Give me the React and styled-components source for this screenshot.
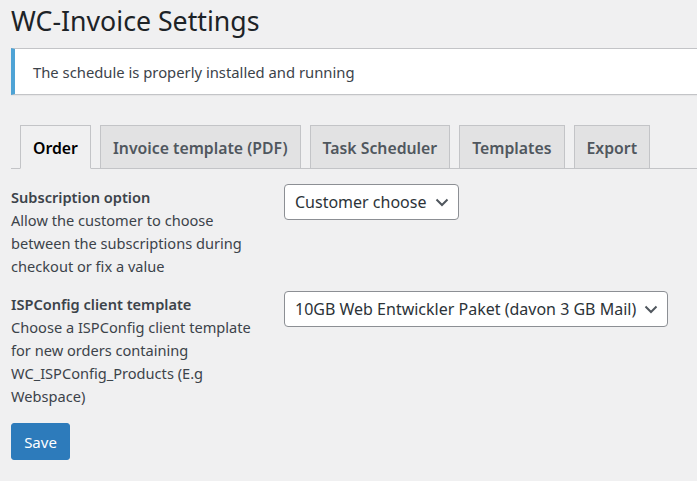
import React from "react";
import styled, { createGlobalStyle } from "styled-components";

const GlobalStyle = createGlobalStyle`
	html, body {
		margin: 0;
		padding: 0;
		background: #f0f0f1;
		font-family: "Noto Sans", "Open Sans", sans-serif;
		color: #3c434a;
	}
`;

const tabs = ["Order", "Invoice template (PDF)", "Task Scheduler", "Templates", "Export"];

const fields = [
	{
		title: "Subscription option",
		lines: ["Allow the customer to choose", "between the subscriptions during", "checkout or fix a value"],
		value: "Customer choose",
	},
	{
		title: "ISPConfig client template",
		lines: [
			"Choose a ISPConfig client template",
			"for new orders containing",
			"WC_ISPConfig_Products (E.g",
			"Webspace)",
		],
		value: "10GB Web Entwickler Paket (davon 3 GB Mail)",
	},
];

const Chevron = () => (
	<svg width="16" height="16" viewBox="0 0 16 16">
		<path d="M2.5 5.5l5.5 5.5 5.5-5.5" fill="none" stroke="#50575e" strokeWidth="2" />
	</svg>
);

export default function App() {
	return (
		<>
			<GlobalStyle />
			<StyledWrap>
				<StyledTitle>WC-Invoice Settings</StyledTitle>
				<StyledNotice>The schedule is properly installed and running</StyledNotice>
				<StyledTabBar>
					{tabs.map((t, i) => (
						<StyledTab key={t} $active={i === 0}>
							{t}
						</StyledTab>
					))}
				</StyledTabBar>
				<StyledForm>
					{fields.map((f) => (
						<StyledRow key={f.title}>
							<StyledLabelBox>
								<StyledLabel>{f.title}</StyledLabel>
								{f.lines.map((l) => (
									<StyledDesc key={l}>{l}</StyledDesc>
								))}
							</StyledLabelBox>
							<StyledSelect>
								<span>{f.value}</span>
								<Chevron />
							</StyledSelect>
						</StyledRow>
					))}
				</StyledForm>
				<StyledSave>Save</StyledSave>
			</StyledWrap>
		</>
	);
}

const StyledWrap = styled.div`
	padding: 0 0 0 11px;
	height: 481px;
	overflow: hidden;
`;

const StyledTitle = styled.h1`
	margin: 0;
	padding-top: 2px;
	font-family: "Noto Sans", "Open Sans", sans-serif;
	font-weight: 400;
	font-size: 26.7px;
	line-height: 37px;
	color: #1d2327;
`;

const StyledNotice = styled.div`
	margin-top: 9px;
	height: 45px;
	display: flex;
	align-items: center;
	padding-left: 18px;
	background: #fff;
	border: 1px solid #c3c4c7;
	border-left: 4px solid #4ea3d5;
	box-shadow: 0 1px 1px rgba(0, 0, 0, 0.04);
	font-size: 14.8px;
	color: #3c434a;
	margin-right: -20px;
`;

const StyledTabBar = styled.div`
	margin-top: 30px;
	display: flex;
	gap: 9px;
	padding-left: 9px;
	border-bottom: 1px solid #c3c4c7;
	height: 43px;
`;

const StyledTab = styled.div`
	box-sizing: border-box;
	height: 44px;
	padding: 1px 12px 0;
	display: flex;
	align-items: center;
	border: 1px solid #c3c4c7;
	border-bottom: ${(p) => (p.$active ? "1px solid #f0f0f1" : "1px solid #c3c4c7")};
	background: ${(p) => (p.$active ? "#f0f0f1" : "#e2e2e3")};
	color: ${(p) => (p.$active ? "#000" : "#50575e")};
	font-size: 15.8px;
	font-weight: 600;
	white-space: nowrap;
`;

const StyledForm = styled.div`
	display: flex;
	flex-direction: column;
	gap: 13px;
	padding-top: 15px;
`;

const StyledRow = styled.div`
	display: flex;
	align-items: flex-start;
`;

const StyledLabelBox = styled.div`
	width: 273px;
	flex: 0 0 273px;
	padding-top: 2px;
`;

const StyledLabel = styled.div`
	font-size: 14.6px;
	font-weight: 600;
	line-height: 23px;
	color: #3c434a;
`;

const StyledDesc = styled.div`
	font-size: 14.6px;
	line-height: 23px;
	color: #3c434a;
	white-space: nowrap;
`;

const StyledSelect = styled.div`
	box-sizing: border-box;
	height: 36px;
	display: inline-flex;
	align-items: center;
	gap: 7px;
	padding: 0 8px 0 10px;
	background: #fff;
	border: 1px solid #8c8f94;
	border-radius: 4px;
	font-size: 16px;
	color: #2c3338;
	white-space: nowrap;
`;

const StyledSave = styled.button`
	margin-top: 15px;
	width: 59px;
	height: 37px;
	background: #2d7bbb;
	border: 1px solid #2d7bbb;
	border-radius: 3px;
	color: #fff;
	font-family: "Noto Sans", "Open Sans", sans-serif;
	font-size: 15px;
	padding: 0;
`;
